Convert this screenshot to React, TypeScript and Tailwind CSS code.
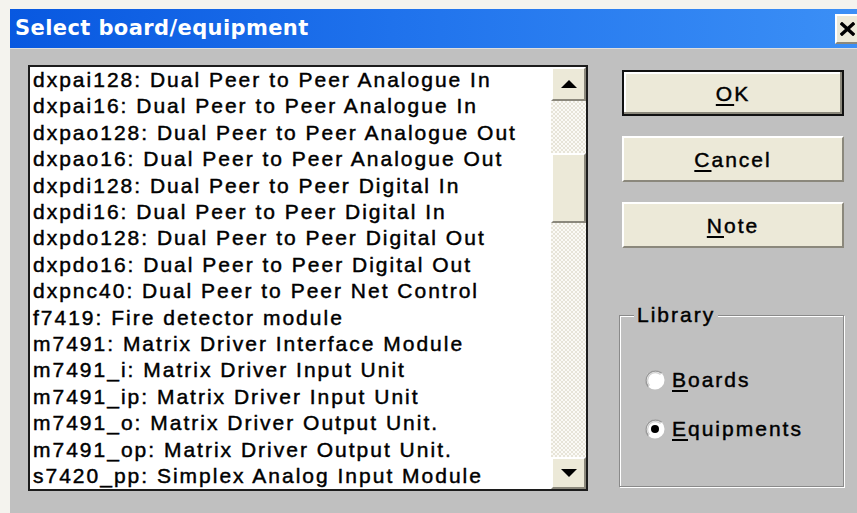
import React from "react";

const ITEMS = [
  "dxpai128: Dual Peer to Peer Analogue In",
  "dxpai16: Dual Peer to Peer Analogue In",
  "dxpao128: Dual Peer to Peer Analogue Out",
  "dxpao16: Dual Peer to Peer Analogue Out",
  "dxpdi128: Dual Peer to Peer Digital In",
  "dxpdi16: Dual Peer to Peer Digital In",
  "dxpdo128: Dual Peer to Peer Digital Out",
  "dxpdo16: Dual Peer to Peer Digital Out",
  "dxpnc40: Dual Peer to Peer Net Control",
  "f7419: Fire detector module",
  "m7491: Matrix Driver Interface Module",
  "m7491_i: Matrix Driver Input Unit",
  "m7491_ip: Matrix Driver Input Unit",
  "m7491_o: Matrix Driver Output Unit.",
  "m7491_op: Matrix Driver Output Unit.",
  "s7420_pp: Simplex Analog Input Module",
];

function Arrow({ up }: { up: boolean }) {
  return (
    <svg width="16" height="8" viewBox="0 0 16 8">
      {up ? <polygon points="0,8 16,8 8,0" fill="#000" /> : <polygon points="0,0 16,0 8,8" fill="#000" />}
    </svg>
  );
}

function Radio({ checked }: { checked: boolean }) {
  return (
    <svg width="20" height="20" viewBox="0 0 20 20">
      <circle cx="10" cy="10" r="9.5" fill="#fff" />
      <path d="M3.3 16.7 A9.5 9.5 0 0 1 16.7 3.3" fill="none" stroke="#9a9a9a" strokeWidth="1.5" />
      <path d="M4.5 15.5 A7.8 7.8 0 0 1 15.5 4.5" fill="none" stroke="#d0d0d0" strokeWidth="1.2" />
      {checked && <circle cx="10" cy="10" r="4" fill="#000" />}
    </svg>
  );
}

function Button({ label, rest, primary }: { label: string; rest: string; primary?: boolean }) {
  return (
    <div
      className={
        "ml-[3px] w-[222px] h-[46px] flex items-center justify-center bg-[#ece9d8] text-[21px] leading-none tracking-[2px] text-black [-webkit-text-stroke:0.45px_#000] " +
        (primary
          ? "border-2 border-[#111] shadow-[inset_-2px_-2px_0_#8b887c,inset_2px_2px_0_#fff]"
          : "border-2 border-t-white border-l-white border-b-[#8b887c] border-r-[#8b887c]")
      }
    >
      <span>
        <span className="underline underline-offset-[3px] decoration-2">{label}</span>
        {rest}
      </span>
    </div>
  );
}

export default function App() {
  return (
    <div className="w-[857px] h-[513px] overflow-hidden bg-[#f4f3ee] pt-[9px] pl-[10px] flex flex-col font-['Liberation_Sans',Arial,sans-serif]">
      {/* title bar */}
      <div className="h-[39px] shrink-0 flex items-center justify-between pl-[5px] bg-[linear-gradient(to_right,#0858e0,#1f72ec_45%,#3b8ff6)]">
        <span className="text-white font-bold text-[21px] tracking-[0.4px] font-['DejaVu_Sans',sans-serif]">
          Select board/equipment
        </span>
        <div className="w-[30px] h-[30px] mr-[-8px] bg-[#ece9d8] border-t-2 border-l-2 border-white border-b-2 border-b-[#8b887c] flex items-center pl-[3px]">
          <svg width="15" height="14" viewBox="0 0 15 14">
            <path d="M2 2 L13 12 M13 2 L2 12" stroke="#000" strokeWidth="3.4" strokeLinecap="square" />
          </svg>
        </div>
      </div>

      {/* dialog body */}
      <div className="flex-1 bg-[#c0c0c0] border-t border-[#dedede] flex pt-[16px] pl-[18px]">
        {/* list box */}
        <div className="w-[560px] h-[426px] border-2 border-[#1c1c1c] bg-white flex">
          <div className="flex-1 pl-[3px] text-[21px] leading-[26.4px] tracking-[2px] text-black whitespace-nowrap overflow-hidden [-webkit-text-stroke:0.45px_#000]">
            {ITEMS.map((t) => (
              <div key={t}>{t}</div>
            ))}
          </div>
          <div className="w-[35px] flex flex-col bg-[repeating-conic-gradient(#fbfaf6_0_25%,#e7e4d8_0_50%)] bg-[length:4px_4px]">
            <div className="h-[34px] bg-[#ece9d8] border-2 border-t-white border-l-white border-b-[#8b887c] border-r-[#8b887c] flex items-center justify-center">
              <Arrow up />
            </div>
            <div className="h-[52px]" />
            <div className="h-[70px] bg-[#ece9d8] border-2 border-t-white border-l-white border-b-[#8b887c] border-r-[#8b887c]" />
            <div className="flex-1" />
            <div className="h-[32px] bg-[#ece9d8] border-2 border-t-white border-l-white border-b-[#8b887c] border-r-[#8b887c] flex items-center justify-center">
              <Arrow up={false} />
            </div>
          </div>
        </div>

        {/* command buttons and library group */}
        <div className="ml-[31px] w-[225px] flex flex-col">
          <div className="mt-[5px]">
            <Button label="O" rest="K" primary />
          </div>
          <div className="mt-[20px]">
            <Button label="C" rest="ancel" />
          </div>
          <div className="mt-[20px]">
            <Button label="N" rest="ote" />
          </div>

          <div className="relative mt-[67px] h-[172px] border border-[#8a8a8a] shadow-[inset_1px_1px_0_#fff,1px_1px_0_#fff] pl-[25px] pt-[51px] text-[21px] tracking-[2px] text-black [-webkit-text-stroke:0.45px_#000]">
            <span className="absolute -top-[13px] left-[14px] px-[3px] bg-[#c0c0c0] leading-[24px]">Library</span>
            <div className="h-[26px] flex items-center gap-[7px]">
              <Radio checked={false} />
              <span>
                <span className="underline underline-offset-[3px] decoration-2">B</span>oards
              </span>
            </div>
            <div className="mt-[23px] h-[26px] flex items-center gap-[7px]">
              <Radio checked />
              <span>
                <span className="underline underline-offset-[3px] decoration-2">E</span>quipments
              </span>
            </div>
          </div>
        </div>
      </div>
    </div>
  );
}
